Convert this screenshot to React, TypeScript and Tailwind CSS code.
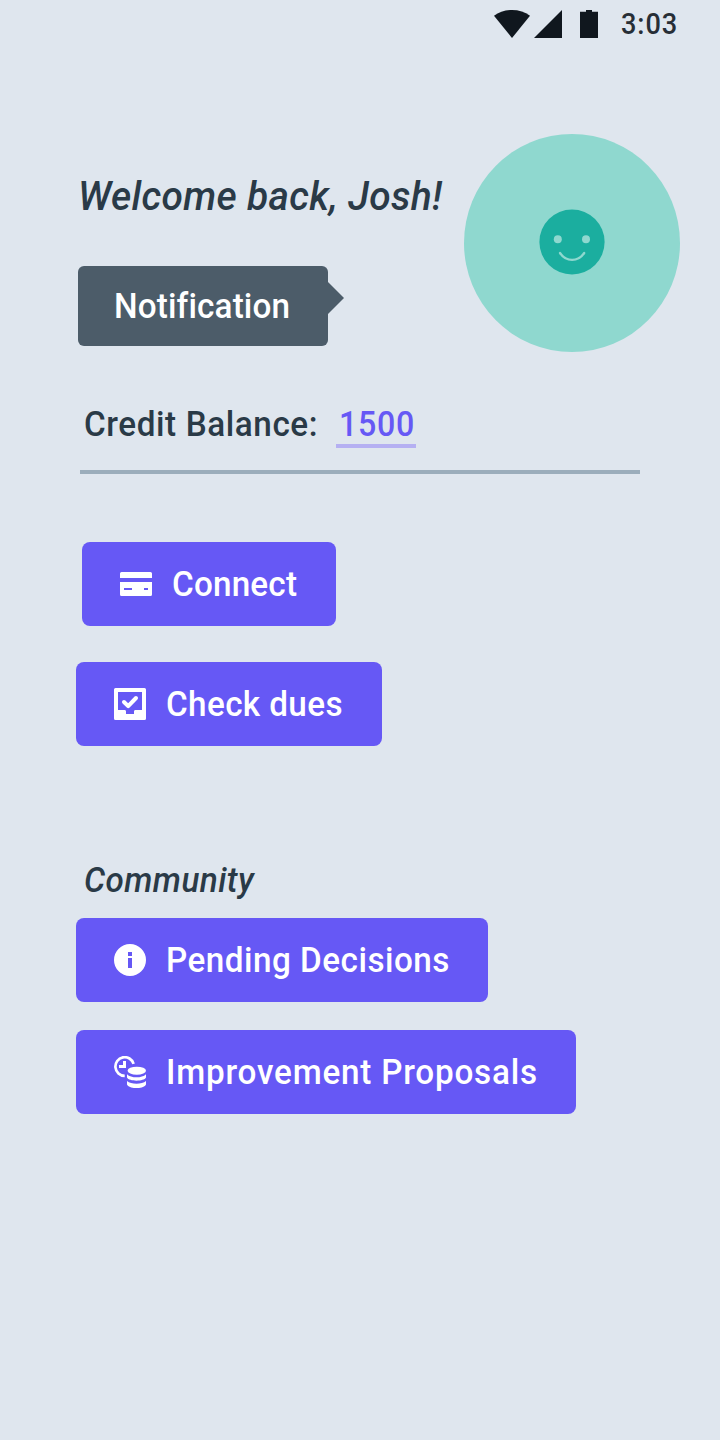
import type { ReactNode } from "react";

function StatusBar() {
  return (
    <header className="flex h-12 items-center pl-[494px] text-[#10171e]">
      <svg width="36" height="28" viewBox="0 0 36 28" fill="currentColor" className="shrink-0">
        <path d="M0 5.8C5 2 11.200 0 18 0s13 2 18 5.800L18 28Z" />
      </svg>
      <svg width="28" height="28" viewBox="0 0 28 28" fill="currentColor" className="ml-1 shrink-0">
        <path d="M28 0v28H0Z" />
      </svg>
      <svg width="18" height="28" viewBox="0 0 18 28" fill="currentColor" className="ml-[18px] shrink-0">
        <path d="M6 0h6v1.700h6V28H0V1.700h6Z" />
      </svg>
      <span className="ml-[23px] origin-left scale-x-92 whitespace-nowrap pt-0.5 text-[29.5px] font-medium leading-none tracking-[1px] text-[#272e36]">
        3:03
      </span>
    </header>
  );
}

function Avatar() {
  return (
    <div className="flex h-[218px] w-[216px] shrink-0 items-center justify-center rounded-[50%] bg-[#8fd8cf]">
      <svg width="66" height="66" viewBox="0 0 66 66" className="-mt-0.5">
        <circle cx="33" cy="33" r="32.600" fill="#1bae9f" />
        <circle cx="18.800" cy="30.200" r="4" fill="#8fd8cf" />
        <circle cx="47" cy="30.200" r="4" fill="#8fd8cf" />
        <path d="M21 44c6 9.200 18.200 9.200 24.200 0" fill="none" stroke="#8fd8cf" strokeWidth="2.300" strokeLinecap="round" />
      </svg>
    </div>
  );
}

function CardIcon() {
  return (
    <svg width="32" height="32" viewBox="0 0 32 32" fill="#fff" className="shrink-0">
      <path d="M1.500 4h29A1.500 1.500 0 0 1 32 5.500V10H0V5.500A1.500 1.500 0 0 1 1.500 4Z" />
      <path fillRule="evenodd" d="M0 14h32v12.500a1.500 1.500 0 0 1-1.500 1.500h-29A1.500 1.500 0 0 1 0 26.500ZM4 20v2h8v-2Zm20 0v2h4v-2Z" />
    </svg>
  );
}

function InboxCheckIcon() {
  return (
    <svg width="32" height="32" viewBox="0 0 32 32" fill="#fff" className="shrink-0">
      <path fillRule="evenodd" d="M1.500 0h29A1.500 1.500 0 0 1 32 1.500v29a1.500 1.500 0 0 1-1.500 1.500h-29A1.500 1.500 0 0 1 0 30.500v-29A1.500 1.500 0 0 1 1.500 0ZM4 4v18h6.500c1 0 1.500 .7 1.500 1.500V26h8v-2.500c0-.8 .5-1.500 1.500-1.500H28V4Z" />
      <path d="M10 14l4.200 4.200L22 10" fill="none" stroke="#fff" strokeWidth="4" strokeLinecap="round" strokeLinejoin="round" />
    </svg>
  );
}

function InfoIcon() {
  return (
    <svg width="32" height="32" viewBox="0 0 32 32" fill="#fff" className="shrink-0">
      <path fillRule="evenodd" d="M16 0a16 16 0 1 1 0 32a16 16 0 0 1 0-32ZM14 8v4h4V8Zm0 6v10h4V14Z" />
    </svg>
  );
}

function TimeCoinsIcon() {
  return (
    <svg width="32" height="32" viewBox="0 0 32 32" fill="#fff" className="shrink-0">
      <path d="M19.600 7.800A9.300 9.300 0 1 0 10.700 19.800" fill="none" stroke="#fff" strokeWidth="2.700" />
      <path d="M9 5h3v7H5V9h4Z" />
      <ellipse cx="22.800" cy="14.700" rx="9.200" ry="4" />
      <path d="M13 18.200c4 4.200 15 4.200 19 0v3.400c-2 4.200-17 4.200-19 0Z" />
      <path d="M13 25c4 3.600 15 3.600 19 0v3.500c-2 4.700-17 4.700-19 0Z" />
    </svg>
  );
}

function ActionButton({ icon, label, className }: { icon: ReactNode; label: string; className: string }) {
  return (
    <button
      className={`flex h-[84px] items-center gap-5 whitespace-nowrap rounded-lg bg-[#6658f5] pl-[38px] text-[35px] font-medium leading-none text-white ${className}`}
    >
      {icon}
      <span className="origin-left scale-x-95">{label}</span>
    </button>
  );
}

export default function App() {
  return (
    <div className="h-[1440px] w-[720px] overflow-hidden bg-[#dfe6ee] font-['Roboto',sans-serif] text-[#2a3a47]">
      <StatusBar />
      <main>
        <section className="flex pt-[86px]">
          <div className="w-[464px] pl-[78px] pt-[42px]">
            <h1 className="origin-left scale-x-95 whitespace-nowrap text-[41px] font-medium italic leading-[40px] tracking-[0.33px]">
              Welcome back, Josh!
            </h1>
            <div className="mt-[50px] flex">
              <div className="flex h-20 w-[250px] items-center whitespace-nowrap rounded-md bg-[#4c5c69] pl-9 text-[35px] font-medium leading-none tracking-[0.15px] text-white">
                <span className="origin-left scale-x-95">Notification</span>
              </div>
              <svg width="16" height="32" viewBox="0 0 16 32" className="mt-4">
                <path d="M0 0l16 16L0 32Z" fill="#4c5c69" />
              </svg>
            </div>
          </div>
          <Avatar />
        </section>

        <section className="ml-20 mt-[52px] flex h-[70px] w-[560px] items-start border-b-4 border-[#9badbb] text-[35px] font-medium leading-[42px]">
          <div className="w-[256px] whitespace-nowrap pl-1 tracking-[0.62px]">
            <span className="inline-block origin-left scale-x-95">Credit Balance:</span>
          </div>
          <div className="h-11 w-20 whitespace-nowrap border-b-4 border-[#b5b0f2] pl-[3px] tracking-[0.8px] text-[#6658f5]">
            <span className="inline-block origin-left scale-x-92">1500</span>
          </div>
        </section>

        <section className="pl-[76px]">
          <ActionButton icon={<CardIcon />} label="Connect" className="ml-1.5 mt-[68px] w-[254px] tracking-[0.2px]" />
          <ActionButton icon={<InboxCheckIcon />} label="Check dues" className="mt-9 w-[306px] tracking-[0.4px]" />
        </section>

        <section className="pl-[76px] pt-[114px]">
          <h2 className="ml-2 origin-left scale-x-95 text-[35px] font-medium italic leading-[42px] tracking-[0.48px]">
            Community
          </h2>
          <ActionButton icon={<InfoIcon />} label="Pending Decisions" className="mt-4 w-[412px] tracking-[0.52px]" />
          <ActionButton icon={<TimeCoinsIcon />} label="Improvement Proposals" className="mt-7 w-[500px] tracking-[0.83px]" />
        </section>
      </main>
    </div>
  );
}
